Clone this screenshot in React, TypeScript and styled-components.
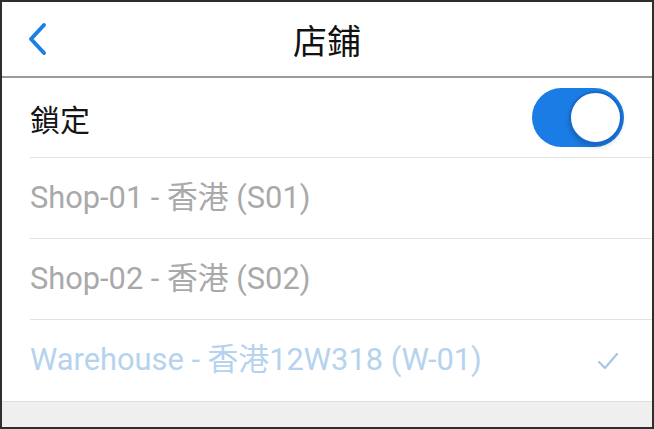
import React from "react";
import styled, { createGlobalStyle } from "styled-components";

const Global = createGlobalStyle`
  html, body { margin: 0; padding: 0; background: #fff; }
  * { box-sizing: border-box; }
  body { font-family: Roboto, "Noto Sans CJK TC", sans-serif; }
`;

const Frame = styled.div`
  width: 654px;
  height: 429px;
  border: 2px solid #2e2e2e;
  display: flex;
  flex-direction: column;
  background: #fff;
  overflow: hidden;
`;

const Header = styled.header`
  height: 76px;
  flex: none;
  border-bottom: 2px solid #9a9a9a;
  display: flex;
  align-items: center;
  justify-content: center;
  position: relative;
`;

const BackButton = styled.button`
  position: absolute;
  left: 20px;
  top: 17px;
  width: 34px;
  height: 40px;
  border: 0;
  background: none;
  padding: 0;
  display: flex;
  align-items: center;
  justify-content: center;
`;

const Title = styled.h1`
  margin: 0;
  font-family: "Noto Sans CJK TC", sans-serif;
  font-size: 34px;
  font-weight: 400;
  color: #111;
  line-height: 1;
  margin-top: 2px;
`;

const List = styled.ul`
  list-style: none;
  margin: 0;
  padding: 0 0 0 28px;
  flex: none;
`;

const Row = styled.li<{ $h: number; $last?: boolean }>`
  height: ${(p) => p.$h}px;
  display: flex;
  align-items: center;
  justify-content: space-between;
  border-bottom: ${(p) => (p.$last ? "none" : "1px solid #e3e3e3")};
  padding-right: 28px;
`;

const Label = styled.span<{ $tone: "dark" | "muted" | "selected" }>`
  font-family: Roboto, "Noto Sans CJK TC", sans-serif;
  font-size: 30.8px;
  color: ${(p) =>
    p.$tone === "dark" ? "#151515" : p.$tone === "muted" ? "#a9a9a9" : "#b5d3ee"};
  line-height: 1;
  white-space: nowrap;
`;

const LockLabel = styled(Label)`
  font-family: "Noto Sans CJK TC", sans-serif;
  font-size: 30px;
`;

const Track = styled.div`
  width: 92px;
  height: 59px;
  border-radius: 30px;
  background: #1a7de6;
  position: relative;
  flex: none;
`;

const Knob = styled.div`
  position: absolute;
  right: 2px;
  top: 3px;
  width: 53px;
  height: 53px;
  border-radius: 50%;
  background: #fff;
  border: 2px solid #1868c9;
  box-shadow: 0 3px 5px rgba(0, 0, 0, 0.18);
`;

const Check = styled.svg`
  margin-right: 3px;
  flex: none;
`;

const Footer = styled.div`
  flex: 1;
  background: #efefef;
  border-top: 1px solid #dedede;
`;

export default function App() {
  return (
    <>
      <Global />
      <Frame>
        <Header>
          <BackButton aria-label="back">
            <svg width="34" height="40" viewBox="0 0 34 40">
              <path
                d="M22 6 L9 20 L22 34"
                fill="none"
                stroke="#1b7fe4"
                strokeWidth="4"
                strokeLinecap="round"
                strokeLinejoin="round"
              />
            </svg>
          </BackButton>
          <Title>店鋪</Title>
        </Header>
        <List>
          <Row $h={80}>
            <LockLabel $tone="dark">鎖定</LockLabel>
            <Track>
              <Knob />
            </Track>
          </Row>
          <Row $h={81}>
            <Label $tone="muted">Shop-01 - 香港 (S01)</Label>
          </Row>
          <Row $h={81}>
            <Label $tone="muted">Shop-02 - 香港 (S02)</Label>
          </Row>
          <Row $h={81} $last>
            <Label $tone="selected">Warehouse - 香港12W318 (W-01)</Label>
            <Check width="26" height="22" viewBox="0 0 26 22">
              <path
                d="M4 12 L10 18 L22 4"
                fill="none"
                stroke="#a9c6e2"
                strokeWidth="2.2"
                strokeLinecap="round"
                strokeLinejoin="round"
              />
            </Check>
          </Row>
        </List>
        <Footer />
      </Frame>
    </>
  );
}
